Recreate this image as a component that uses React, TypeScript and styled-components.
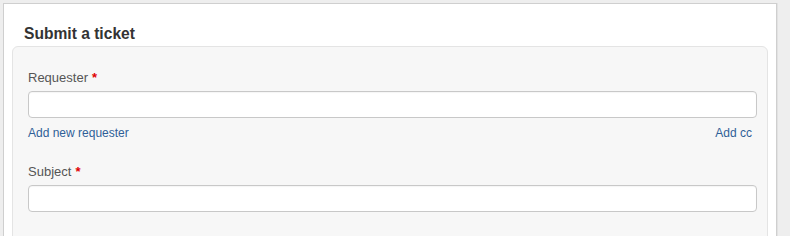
import React from "react";
import styled, { createGlobalStyle } from "styled-components";

const Global = createGlobalStyle`
  html, body { margin: 0; padding: 0; background: #eeeeee; }
  body { font-family: "Liberation Sans", Arial, Helvetica, sans-serif; }
  * { box-sizing: border-box; }
`;

const Page = styled.div`
  padding: 3px 0 0 3px;
  width: 790px;
  height: 236px;
  overflow: hidden;
`;

const Panel = styled.div`
  width: 774px;
  height: 260px;
  background: #ffffff;
  border: 1px solid #cfcfcf;
  box-shadow: 1px 0 0 #e2e2e2;
  padding: 21px 0 0 8px;
`;

const Title = styled.h2`
  margin: 0 0 3px 12px;
  font-size: 15.6px;
  line-height: 18px;
  font-weight: bold;
  color: #333333;
`;

const FormBox = styled.div`
  width: 756px;
  background: #f7f7f7;
  border: 1px solid #e4e4e4;
  border-radius: 6px;
  padding: 22px 10px 30px 15px;
  display: flex;
  flex-direction: column;
`;

const Field = styled.div<{ $spaced?: boolean }>`
  display: flex;
  flex-direction: column;
  margin-top: ${(p) => (p.$spaced ? "22px" : "0")};
`;

const Label = styled.label`
  font-size: 13px;
  line-height: 18px;
  color: #555555;
  margin-bottom: 4px;
`;

const Required = styled.span`
  color: #e00000;
  font-weight: bold;
  margin-left: 4px;
`;

const Input = styled.input`
  width: 100%;
  height: 27px;
  border: 1px solid #c8c8c8;
  border-radius: 4px;
  background: #ffffff;
  box-shadow: inset 0 1px 1px rgba(0, 0, 0, 0.04);
  outline: none;
  font: 13px "Liberation Sans", Arial, sans-serif;
  padding: 0 6px;
`;

const Links = styled.div`
  display: flex;
  justify-content: space-between;
  margin-top: 7px;
  padding-right: 5px;
`;

const Link = styled.a`
  font-size: 12px;
  line-height: 16px;
  color: #2f5f98;
  text-decoration: none;
  cursor: pointer;
`;

export default function App() {
  return (
    <>
      <Global />
      <Page>
        <Panel>
          <Title>Submit a ticket</Title>
          <FormBox>
            <Field>
              <Label>
                Requester<Required>*</Required>
              </Label>
              <Input type="text" />
              <Links>
                <Link>Add new requester</Link>
                <Link>Add cc</Link>
              </Links>
            </Field>
            <Field $spaced>
              <Label>
                Subject<Required>*</Required>
              </Label>
              <Input type="text" />
            </Field>
          </FormBox>
        </Panel>
      </Page>
    </>
  );
}
